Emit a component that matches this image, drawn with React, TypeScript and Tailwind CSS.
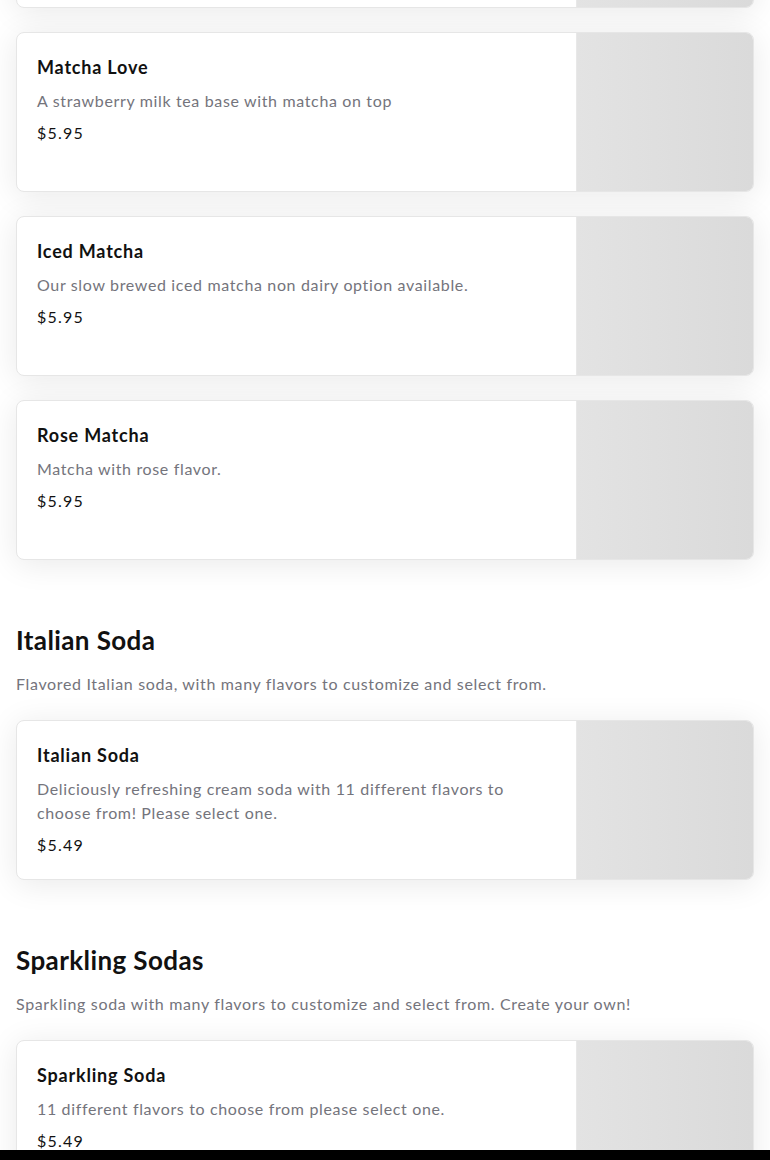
import React from 'react'

interface Item {
  name: string
  desc: string
  price: string
}

interface Section {
  title?: string
  desc?: string
  items: Item[]
}

const sections: Section[] = [
  {
    items: [
      { name: 'Matcha Latte', desc: 'Matcha with milk.', price: '$5.95' },
      { name: 'Matcha Love', desc: 'A strawberry milk tea base with matcha on top', price: '$5.95' },
      { name: 'Iced Matcha', desc: 'Our slow brewed iced matcha non dairy option available.', price: '$5.95' },
      { name: 'Rose Matcha', desc: 'Matcha with rose flavor.', price: '$5.95' },
    ],
  },
  {
    title: 'Italian Soda',
    desc: 'Flavored Italian soda, with many flavors to customize and select from.',
    items: [
      {
        name: 'Italian Soda',
        desc: 'Deliciously refreshing cream soda with 11 different flavors to choose from! Please select one.',
        price: '$5.49',
      },
    ],
  },
  {
    title: 'Sparkling Sodas',
    desc: 'Sparkling soda with many flavors to customize and select from. Create your own!',
    items: [
      { name: 'Sparkling Soda', desc: '11 different flavors to choose from please select one.', price: '$5.49' },
    ],
  },
]

function MenuCard({ item }: { item: Item }) {
  return (
    <div className="flex h-[160px] rounded-lg border border-[#e6e6e6] bg-white shadow-[0_4px_32px_rgba(0,0,0,0.09)] overflow-hidden">
      <div className="flex-1 pt-[20px] px-5 pr-6">
        <h3 className="text-[18px] leading-7 font-bold text-[#111] tracking-[0.8px] mb-2">{item.name}</h3>
        <p className="text-[16px] leading-6 text-[#74747c] tracking-[0.65px] mb-2">{item.desc}</p>
        <p className="text-[16px] leading-6 text-[#111] tracking-[1.2px]">{item.price}</p>
      </div>
      <div className="w-[177px] shrink-0 border-l border-[#e8e8e8] bg-gradient-to-r from-[#e3e3e3] to-[#dadada]" />
    </div>
  )
}

export default function App() {
  return (
    <div className="h-[1160px] overflow-hidden bg-white" style={{ fontFamily: 'Lato, "Open Sans", sans-serif' }}>
      <div className="px-4 -mt-[152px]">
        {sections.map((s, i) => (
          <div key={i} className={i > 0 ? 'mt-16' : ''}>
            {s.title && (
              <div className="mb-6">
                <h2 className="text-[26px] leading-8 font-bold text-[#111] tracking-[0.4px] mb-4">{s.title}</h2>
                <p className="text-[16px] leading-6 text-[#74747c] tracking-[0.65px]">{s.desc}</p>
              </div>
            )}
            <div className="flex flex-col gap-6">
              {s.items.map((it) => (
                <MenuCard key={it.name} item={it} />
              ))}
            </div>
          </div>
        ))}
      </div>
      <div className="fixed bottom-0 left-0 right-0 h-[10px] bg-black" />
    </div>
  )
}
